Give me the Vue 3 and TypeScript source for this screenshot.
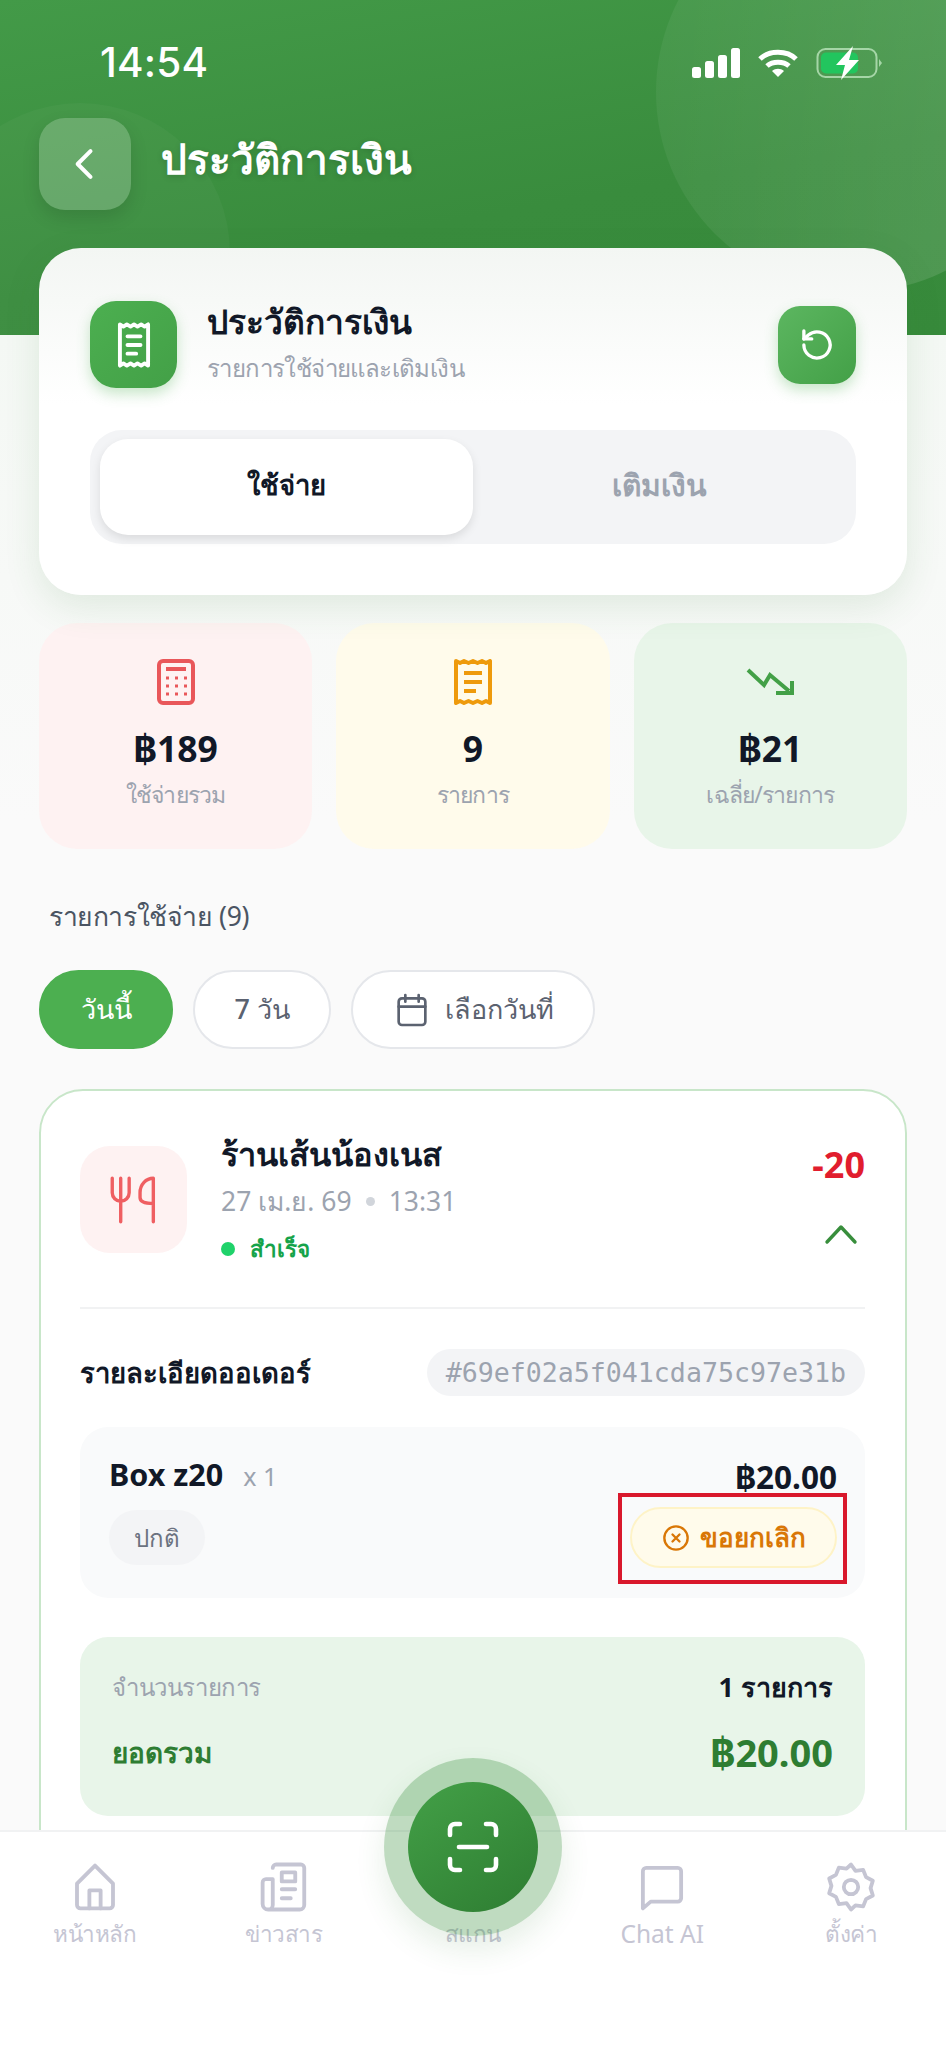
<template>
  <div class="page">
    <header class="hero">
      <span class="hero__circle hero__circle--big"></span>
      <span class="hero__circle hero__circle--small"></span>
      <div class="status">
        <span class="status__time">14:54</span>
        <div class="status__icons">
          <svg width="48" height="30" viewBox="0 0 48 30" fill="#fff">
            <rect x="0" y="19" width="9" height="11" rx="2.5" />
            <rect x="13" y="13" width="9" height="17" rx="2.5" />
            <rect x="26" y="7" width="9" height="23" rx="2.5" />
            <rect x="39" y="0" width="9" height="30" rx="2.5" />
          </svg>
          <svg width="42" height="30" viewBox="0 0 42 30" fill="none" stroke="#fff" stroke-width="5">
            <path d="M3 11C12 2 30 2 39 11" />
            <path d="M10 18C15.500 13 26.500 13 32 18" />
            <path d="M21 29l-6-6c3.500-3 8.500-3 12 0z" fill="#fff" stroke="none" />
          </svg>
          <svg width="66" height="34" viewBox="0 0 66 34" fill="none">
            <rect x="1.500" y="3" width="59" height="28" rx="8" stroke="#a5d6a7" stroke-width="2" />
            <rect x="5" y="6.500" width="37" height="21" rx="5" fill="#22c55e" />
            <path d="M63 13l3 4-3 4z" fill="#a5d6a7" />
            <path d="M37 0L20 19h9l-4 15 18-20h-10z" fill="#fff" />
          </svg>
        </div>
      </div>
      <div class="topbar">
        <button class="topbar__back">
          <svg width="44" height="44" viewBox="0 0 24 24" fill="none" stroke="#fff" stroke-width="2.200" stroke-linecap="round" stroke-linejoin="round">
            <path d="M15 5l-7 7 7 7" />
          </svg>
        </button>
        <h1 class="topbar__title">ประวัติการเงิน</h1>
      </div>
    </header>

    <section class="summary-card">
      <div class="summary-card__head">
        <div class="summary-card__icon">
          <svg width="52" height="52" viewBox="0 0 24 24" fill="none" stroke="#fff" stroke-width="1.800" stroke-linejoin="round" stroke-linecap="round">
            <path d="M5.500 2.500l1.600 1 1.600-1 1.700 1 1.600-1 1.600 1 1.700-1 1.600 1 1.600-1v19l-1.600-1-1.600 1-1.700-1-1.600 1-1.600-1-1.700 1-1.600-1-1.600 1z" />
            <path d="M9 8h6M9 12h6M9 16h4" />
          </svg>
        </div>
        <div class="summary-card__text">
          <div class="summary-card__title">ประวัติการเงิน</div>
          <div class="summary-card__sub">รายการใช้จ่ายและเติมเงิน</div>
        </div>
        <button class="summary-card__refresh">
          <svg width="42" height="42" viewBox="0 0 24 24" fill="none" stroke="#fff" stroke-width="1.900" stroke-linecap="round" stroke-linejoin="round">
            <path d="M4.500 12a7.500 7.500 0 1 0 2.600-5.700L4.500 8.500" />
            <path d="M4.500 4v4.500H9" />
          </svg>
        </button>
      </div>
      <div class="tabs">
        <button class="tabs__item tabs__item--active">ใช้จ่าย</button>
        <button class="tabs__item">เติมเงิน</button>
      </div>
    </section>

    <section class="stats">
      <div v-for="stat in stats" :key="stat.label" class="stat" :class="`stat--${stat.tone}`">
        <svg v-if="stat.tone === 'red'" class="stat__icon" width="38" height="46" viewBox="0 0 38 46" fill="none" stroke="#e9575a" stroke-width="4">
          <rect x="2" y="2" width="34" height="42" rx="4" />
          <path d="M9 10h20" stroke-width="4" />
          <path d="M9 19h3M18 19h3M27 19h3M9 27h3M18 27h3M27 27h3M9 35h3M18 35h3M27 35h3" stroke-width="3" />
        </svg>
        <svg v-else-if="stat.tone === 'yellow'" class="stat__icon" width="38" height="46" viewBox="0 0 38 46" fill="none" stroke="#ee9a0c" stroke-width="4" stroke-linejoin="round">
          <path d="M2 2l4 2 4-2 4.500 2 4.500-2 4.500 2 4.500-2 4 2 4-2v42l-4-2-4 2-4.500-2-4.500 2-4.500-2-4.500 2-4-2-4 2z" />
          <path d="M10 14h18M10 23h18M10 32h12" />
        </svg>
        <svg v-else class="stat__icon" width="50" height="46" viewBox="0 0 50 46" fill="none" stroke="#43a047" stroke-width="4">
          <path d="M3 11l16 15 6-10 19 16" />
          <path d="M31 34h16V22" />
        </svg>
        <div class="stat__value">{{ stat.value }}</div>
        <div class="stat__label">{{ stat.label }}</div>
      </div>
    </section>

    <h2 class="list-title">รายการใช้จ่าย (9)</h2>

    <div class="chips">
      <button class="chip chip--active">วันนี้</button>
      <button class="chip">7 วัน</button>
      <button class="chip chip--date">
        <svg width="40" height="40" viewBox="0 0 24 24" fill="none" stroke="#5b6270" stroke-width="1.600" stroke-linecap="round">
          <rect x="4" y="5" width="16" height="16" rx="2" />
          <path d="M4 10h16M8 3v4M16 3v4" />
        </svg>
        เลือกวันที่
      </button>
    </div>

    <article class="order">
      <div class="order__head">
        <div class="order__icon">
          <svg width="58" height="58" viewBox="0 0 24 24" fill="none" stroke="#ef5f62" stroke-width="1.400" stroke-linecap="round" stroke-linejoin="round">
            <path d="M3 3v6a3.500 3.500 0 0 0 7 0V3M6.500 3v18" />
            <path d="M20 21V3c-3 0-5.500 2.500-5.500 6v2c0 1.500 1.500 2.500 5.500 2.500" />
          </svg>
        </div>
        <div class="order__main">
          <div class="order__name">ร้านเส้นน้องเนส</div>
          <div class="order__date">27 เม.ย. 69<span class="order__sep"></span>13:31</div>
          <div class="order__status"><span class="order__dot"></span>สำเร็จ</div>
        </div>
        <div class="order__side">
          <div class="order__amount">-20</div>
          <svg class="order__toggle" width="34" height="34" viewBox="0 0 34 34" fill="none" stroke="#388e3c" stroke-width="3.400" stroke-linecap="round" stroke-linejoin="round">
            <path d="M3 25L17 10l14 15" />
          </svg>
        </div>
      </div>

      <div class="order__rule"></div>

      <div class="order__ref-row">
        <div class="order__ref-label">รายละเอียดออเดอร์</div>
        <div class="order__ref">#69ef02a5f041cda75c97e31b</div>
      </div>

      <div class="line-item">
        <div class="line-item__top">
          <div><span class="line-item__name">Box z20</span><span class="line-item__qty">x 1</span></div>
          <div class="line-item__price">฿20.00</div>
        </div>
        <div class="line-item__bottom">
          <span class="line-item__badge">ปกติ</span>
          <div class="line-item__action">
            <button class="cancel-btn">
              <svg width="28" height="28" viewBox="0 0 24 24" fill="none" stroke="#d97706" stroke-width="2" stroke-linecap="round">
                <circle cx="12" cy="12" r="10" />
                <path d="M9 9l6 6M15 9l-6 6" />
              </svg>
              ขอยกเลิก
            </button>
            <span class="line-item__mark"></span>
          </div>
        </div>
      </div>

      <div class="totals">
        <div class="totals__row">
          <span class="totals__label">จำนวนรายการ</span>
          <span class="totals__count">1 รายการ</span>
        </div>
        <div class="totals__row totals__row--sum">
          <span class="totals__sum-label">ยอดรวม</span>
          <span class="totals__sum">฿20.00</span>
        </div>
      </div>
    </article>

    <nav class="tabbar">
      <div class="scan">
        <div class="scan__btn">
          <svg width="52" height="52" viewBox="0 0 52 52" fill="none" stroke="#fff" stroke-width="4.600" stroke-linecap="round" stroke-linejoin="round">
            <path d="M3 14V8a5 5 0 0 1 5-5h5M39 3h5a5 5 0 0 1 5 5v6M3 38v6a5 5 0 0 0 5 5h5M39 49h5a5 5 0 0 0 5-5v-6" />
            <path d="M12 26h28" />
          </svg>
        </div>
      </div>
      <div v-for="item in navItems" :key="item.label" class="tabbar__item">
        <svg v-if="item.paths.length" width="54" height="54" viewBox="0 0 24 24" fill="none" stroke="#c5c5d3" stroke-width="1.700" stroke-linecap="round" stroke-linejoin="round">
          <path v-for="d in item.paths" :key="d" :d="d" />
        </svg>
        <div v-else class="tabbar__gap"></div>
        <span class="tabbar__label" :class="{ 'tabbar__label--latin': item.label === 'Chat AI' }">{{ item.label }}</span>
      </div>
    </nav>
  </div>
</template>

<script setup lang="ts">
interface Stat {
  tone: 'red' | 'yellow' | 'green'
  value: string
  label: string
}

interface NavItem {
  label: string
  paths: string[]
}

const stats: Stat[] = [
  { tone: 'red', value: '฿189', label: 'ใช้จ่ายรวม' },
  { tone: 'yellow', value: '9', label: 'รายการ' },
  { tone: 'green', value: '฿21', label: 'เฉลี่ย/รายการ' },
]

const navItems: NavItem[] = [
  {
    label: 'หน้าหลัก',
    paths: [
      'M4 10.500L12 2.500l8 8V20a1.500 1.500 0 0 1-1.500 1.500h-13A1.500 1.500 0 0 1 4 20z',
      'M9.500 21.500V13.500h5v8',
    ],
  },
  {
    label: 'ข่าวสาร',
    paths: [
      'M7 3.500A1.500 1.500 0 0 1 8.500 2h11A1.500 1.500 0 0 1 21 3.500V20a2 2 0 0 1-2 2H5a2.500 2.500 0 0 1-2.500-2.500V10A1.500 1.500 0 0 1 4 8.500h3V20a2 2 0 0 1-2 2',
      'M11 5.500h6v4h-6zM11 13h6M11 17h4',
    ],
  },
  { label: 'สแกน', paths: [] },
  {
    label: 'Chat AI',
    paths: ['M3.500 5A1.500 1.500 0 0 1 5 3.500h14A1.500 1.500 0 0 1 20.500 5v12a1.500 1.500 0 0 1-1.500 1.500H7l-3.500 3z'],
  },
  {
    label: 'ตั้งค่า',
    paths: [
      'M12 2l2 2.800 3.400-.4 1.300 3.200 3 1.600-1 3.300 1 3.300-3 1.600-1.300 3.200-3.400-.4L12 22l-2-2.800-3.400.4-1.300-3.200-3-1.600 1-3.300-1-3.300 3-1.600 1.300-3.200 3.400.4z',
      'M12 8.800a3.200 3.200 0 1 0 0 6.400 3.200 3.200 0 0 0 0-6.400z',
    ],
  },
]
</script>

<style>
html,
body {
  margin: 0;
  background: #fafafa;
}
</style>

<style scoped>
.page {
  position: relative;
  width: 946px;
  height: 2048px;
  overflow: hidden;
  background: linear-gradient(180deg, #f4f8f4 335px, #fafafa 820px);
  font-family: "Noto Sans", "Inter", sans-serif;
  color: #111827;
}
button { font-family: inherit; border: none; padding: 0; cursor: pointer; }
h1, h2 { margin: 0; }

.hero {
  position: relative;
  height: 335px;
  overflow: hidden;
  background: linear-gradient(170deg, #439a48 0%, #398c3d 60%, #378a3b 100%);
}
.hero__circle { position: absolute; border-radius: 50%; }
.hero__circle--big {
  left: 656px;
  top: -108px;
  width: 400px;
  height: 400px;
  background: linear-gradient(90deg, rgba(255, 255, 255, 0.05), rgba(255, 255, 255, 0.14));
}
.hero__circle--small { left: -70px; top: 103px; width: 300px; height: 300px; background: rgba(255, 255, 255, 0.03); }

.status {
  position: relative;
  display: flex;
  justify-content: space-between;
  align-items: center;
  height: 30px;
  padding: 48px 64px 0 100px;
}
.status__time { font-family: "Inter", sans-serif; font-size: 40.500px; font-weight: 500; letter-spacing: 0.2px; color: #fff; line-height: 30px; }
.status__icons { display: flex; align-items: center; gap: 17px; }

.topbar { position: relative; display: flex; align-items: center; gap: 30px; margin: 40px 0 0 39px; }
.topbar__back {
  display: flex;
  align-items: center;
  justify-content: center;
  width: 92px;
  height: 92px;
  border-radius: 26px;
  background: rgba(255, 255, 255, 0.2);
  box-shadow: 0 8px 18px rgba(0, 0, 0, 0.12);
}
.topbar__title { margin-bottom: 10px; font-size: 40.500px; font-weight: 700; color: #fff; text-shadow: 0 2px 6px rgba(0, 0, 0, 0.15); }

.summary-card {
  position: relative;
  margin: -87px 39px 0;
  height: 347px;
  box-sizing: border-box;
  padding: 53px 51px 0;
  border-radius: 42px;
  background: linear-gradient(180deg, #f3f6f3 0%, #fff 45%);
  box-shadow: 0 12px 36px rgba(46, 125, 50, 0.12);
}
.summary-card__head { display: flex; align-items: center; }
.summary-card__icon {
  display: flex;
  align-items: center;
  justify-content: center;
  width: 87px;
  height: 87px;
  border-radius: 26px;
  background: linear-gradient(135deg, #4caf50, #43a047);
  box-shadow: 0 6px 14px rgba(76, 175, 80, 0.3);
}
.summary-card__text { flex: 1; margin: -2px 0 0 30px; }
.summary-card__title { font-size: 33.500px; font-weight: 700; line-height: 40px; }
.summary-card__sub { margin-top: 9px; font-size: 24px; letter-spacing: -0.6px; line-height: 36px; color: #9ca3af; }
.summary-card__refresh {
  display: flex;
  align-items: center;
  justify-content: center;
  width: 78px;
  height: 78px;
  border-radius: 22px;
  background: linear-gradient(135deg, #5cb660, #43a047);
  box-shadow: 0 6px 14px rgba(76, 175, 80, 0.3);
}

.tabs {
  display: grid;
  grid-template-columns: 373px 1fr;
  height: 114px;
  box-sizing: border-box;
  margin-top: 42px;
  padding: 9px 10px;
  border-radius: 32px;
  background: #f3f4f6;
}
.tabs__item { padding-bottom: 4px; background: transparent; font-size: 30px; font-weight: 600; color: #9ca3af; border-radius: 28px; }
.tabs__item--active { background: #fff; color: #111827; font-size: 27.500px; font-weight: 700; box-shadow: 0 4px 10px rgba(0, 0, 0, 0.1); }

.stats { display: grid; grid-template-columns: repeat(3, 1fr); gap: 24px; margin: 28px 39px 0; }
.stat { display: flex; flex-direction: column; align-items: center; height: 226px; box-sizing: border-box; padding-top: 36px; border-radius: 38px; }
.stat--red { background: #fef2f2; }
.stat--yellow { background: #fffbeb; }
.stat--green { background: #e8f5e9; }
.stat__value { margin-top: 21px; font-size: 35.500px; font-weight: 700; line-height: 44px; height: 44px; }
.stat__label { margin-top: 8px; font-size: 23px; letter-spacing: -0.8px; line-height: 32px; color: #9ca3af; }

.list-title { margin: 49px 0 0 49px; font-size: 26.500px; font-weight: 400; letter-spacing: -0.4px; line-height: 36px; color: #4b5563; }

.chips { display: flex; gap: 20px; margin: 36px 39px 0; }
.chip {
  display: flex;
  align-items: center;
  gap: 13px;
  height: 79px;
  box-sizing: border-box;
  padding: 0 39.500px;
  border: 2px solid #e5e7eb;
  border-radius: 40px;
  background: #fff;
  font-size: 27px;
  font-weight: 500;
  color: #5b6270;
}
.chip--date { padding: 0 39px; }
.chip--active { border-color: #4caf50; background: #4caf50; color: #fff; }

.order {
  margin: 40px 39px 0;
  height: 900px;
  box-sizing: border-box;
  padding: 0 40px 0 39px;
  border: 2px solid #c8e6c9;
  border-radius: 44px;
  background: #fff;
}
.order__head { display: flex; align-items: flex-start; padding-top: 41px; }
.order__icon {
  display: flex;
  align-items: center;
  justify-content: center;
  width: 107px;
  height: 107px;
  margin: 14px 34px 0 0;
  border-radius: 30px;
  background: #fef2f2;
}
.order__main { flex: 1; }
.order__name { font-size: 32.500px; font-weight: 600; line-height: 44px; }
.order__date { display: flex; align-items: center; margin-top: 7px; font-size: 26.500px; line-height: 36px; color: #9ca3af; }
.order__sep { width: 9px; height: 9px; margin: 0 14px; border-radius: 50%; background: #d1d5db; }
.order__status { display: flex; align-items: center; gap: 15px; margin-top: 13px; font-size: 22.500px; font-weight: 700; line-height: 34px; color: #16a34a; }
.order__dot { width: 14px; height: 14px; border-radius: 50%; background: #1fd26a; }
.order__side { display: flex; flex-direction: column; align-items: flex-end; }
.order__amount { margin-top: 11px; font-size: 36px; font-weight: 700; line-height: 44px; color: #e11d2e; }
.order__toggle { margin-top: 30px; margin-right: 7px; }
.order__rule { height: 2px; margin-top: 41px; background: #f1f2f3; }

.order__ref-row { display: flex; justify-content: space-between; align-items: center; margin-top: 40px; }
.order__ref-label { font-size: 27.500px; font-weight: 700; }
.order__ref {
  height: 47px;
  padding: 0 19px;
  border-radius: 24px;
  background: #f3f4f6;
  font-family: "DejaVu Sans Mono", monospace;
  font-size: 26.600px;
  line-height: 47px;
  color: #9ca3af;
}

.line-item { height: 171px; box-sizing: border-box; margin-top: 31px; padding: 30px 28px 0 29px; border-radius: 28px; background: #f9fafb; }
.line-item__top { display: flex; justify-content: space-between; align-items: center; height: 40px; line-height: 40px; }
.line-item__name { font-size: 30.500px; font-weight: 700; }
.line-item__qty { margin-left: 20px; font-size: 25px; color: #9ca3af; }
.line-item__price { font-size: 31.500px; font-weight: 700; }
.line-item__bottom { display: flex; justify-content: space-between; align-items: center; margin-top: 10px; }
.line-item__badge {
  height: 55px;
  padding: 0 25px;
  border-radius: 28px;
  background: #f3f4f6;
  font-size: 24px;
  line-height: 55px;
  color: #6b7280;
}
.line-item__action { position: relative; }
.line-item__mark { position: absolute; inset: -14px -10px -16px -12px; border: 4px solid #d9182c; pointer-events: none; }
.cancel-btn {
  display: flex;
  align-items: center;
  justify-content: center;
  gap: 10px;
  width: 207px;
  height: 61px;
  border: 2px solid #fef3c7;
  border-radius: 31px;
  background: #fffbeb;
  font-size: 26px;
  font-weight: 700;
  color: #d97706;
}

.totals { height: 179px; box-sizing: border-box; margin-top: 39px; padding: 32px 32px 0; border-radius: 28px; background: #e8f5e9; }
.totals__row { display: flex; justify-content: space-between; align-items: center; height: 36px; line-height: 36px; }
.totals__row--sum { margin-top: 22px; height: 50px; line-height: 50px; }
.totals__label { font-size: 24px; letter-spacing: -0.4px; color: #9ca3af; }
.totals__count { font-size: 27px; font-weight: 700; }
.totals__sum-label { font-size: 28px; font-weight: 700; color: #2e7d32; }
.totals__sum { font-size: 38px; font-weight: 700; color: #2e7d32; }

.tabbar {
  position: absolute;
  left: 0;
  right: 0;
  top: 1830px;
  bottom: 0;
  display: grid;
  grid-template-columns: repeat(5, 1fr);
  align-items: start;
  border-top: 2px solid #f1f2f3;
  background: #fff;
}
.tabbar__item { display: flex; flex-direction: column; align-items: center; padding-top: 28px; }
.tabbar__gap { height: 54px; }
.tabbar__label { margin-top: 4px; font-size: 22.500px; letter-spacing: -0.5px; line-height: 32px; color: #c5c5d3; }
.tabbar__label--latin { font-size: 24.500px; letter-spacing: 0; }

.scan {
  position: absolute;
  left: 384px;
  top: -74px;
  z-index: 2;
  display: flex;
  align-items: center;
  justify-content: center;
  width: 178px;
  height: 178px;
  border-radius: 50%;
  background: rgba(56, 142, 60, 0.32);
  box-shadow: 0 14px 30px rgba(46, 125, 50, 0.12);
}
.scan__btn {
  display: flex;
  align-items: center;
  justify-content: center;
  width: 130px;
  height: 130px;
  border-radius: 50%;
  background: linear-gradient(145deg, #43a047, #2e7d32);
}
</style>
